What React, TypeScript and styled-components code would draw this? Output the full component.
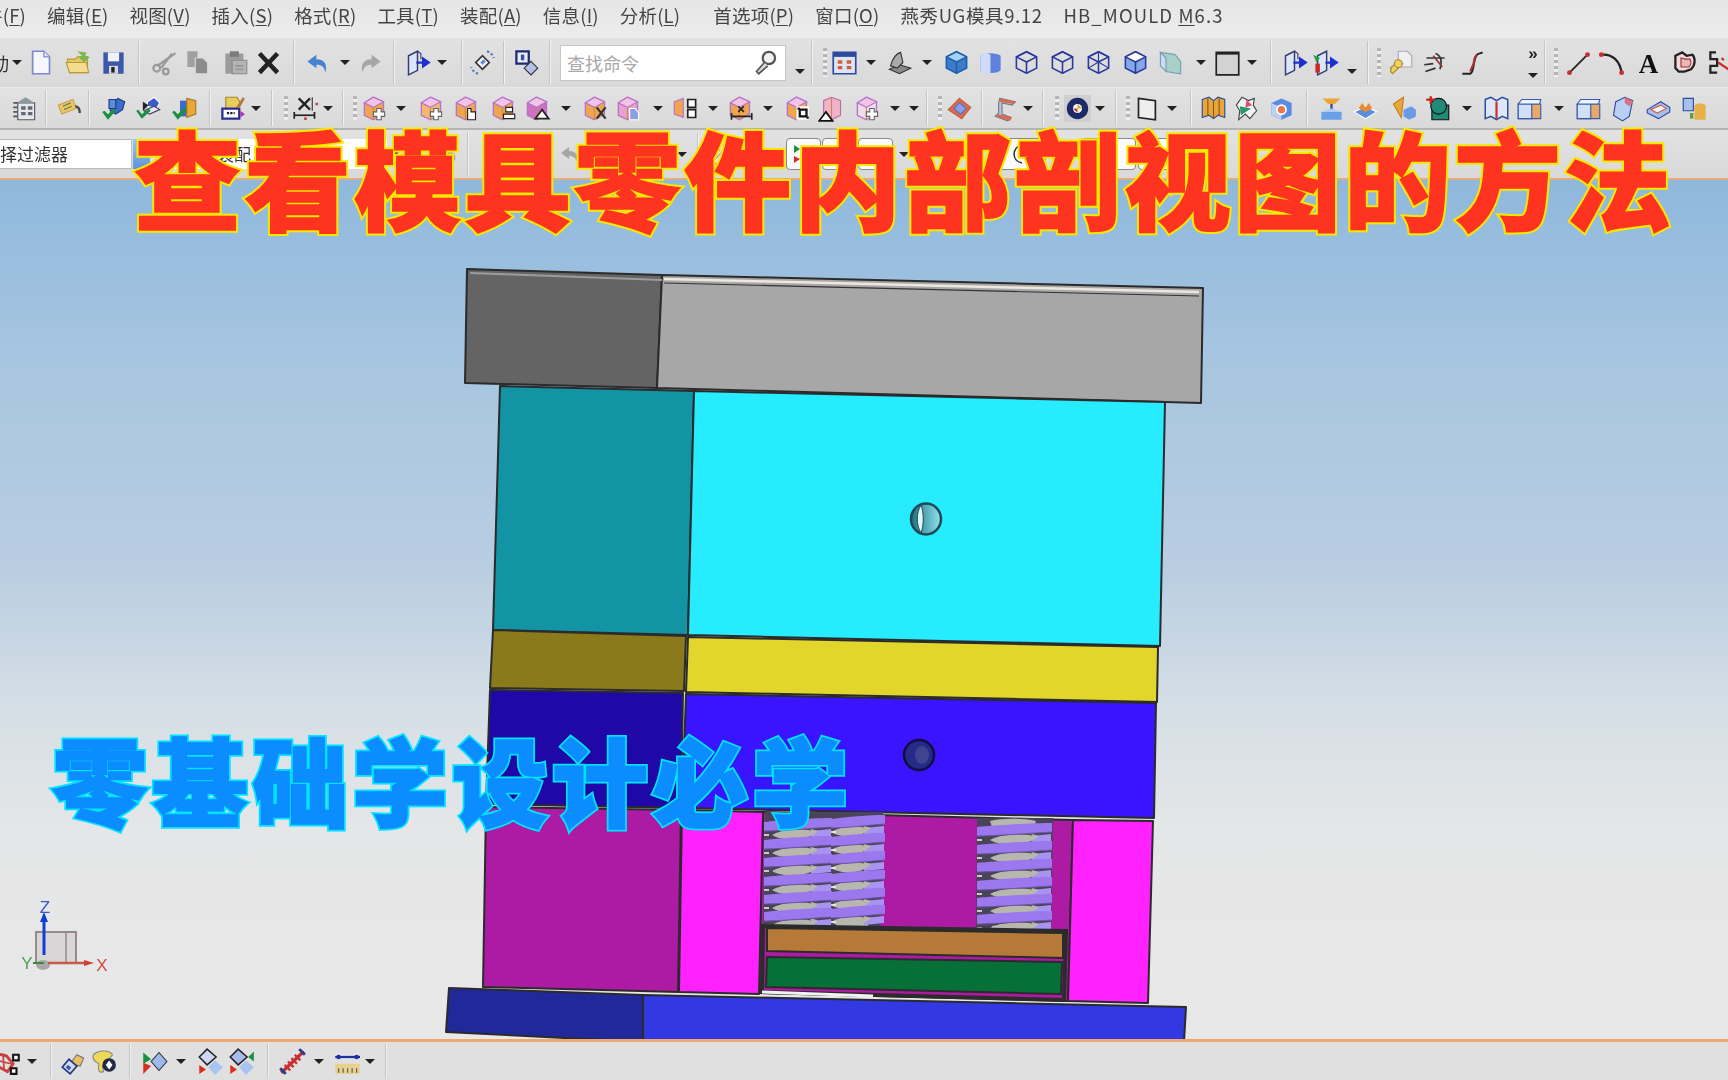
import React from "react";
import styled, { createGlobalStyle } from "styled-components";

const Global = createGlobalStyle`
  html, body { margin: 0; padding: 0; background: #e8e8e8; }
  #root { width: 1728px; height: 1080px; overflow: hidden; }
`;

const Page = styled.div`
  position: relative;
  width: 1728px;
  height: 1080px;
  overflow: hidden;
  display: flex;
  flex-direction: column;
  font-family: "Noto Sans CJK SC", "Noto Sans", sans-serif;
`;
const MenuBar = styled.div`
  height: 38px;
  box-sizing: border-box;
  padding-bottom: 8px;
  flex: none;
  display: flex;
  align-items: center;
  gap: 21px;
  margin-left: -16px;
  background: linear-gradient(#e6e6e6, #ececec);
  filter: blur(0.45px);
`;
const MenuItem = styled.span<{ $after?: number; $track?: number }>`
  font-size: 18.5px;
  color: #444;
  white-space: nowrap;
  margin-right: ${(p) => p.$after ?? 0}px;
  letter-spacing: ${(p) => p.$track ?? 0.2}px;
  u { text-underline-offset: 2px; }
`;
const ToolRow = styled.div<{ $h: number; $top?: number }>`
  height: ${(p) => p.$h}px;
  margin-top: ${(p) => p.$top ?? 0}px;
  flex: none;
  display: flex;
  align-items: center;
  background: linear-gradient(#e2e2e2, #d9d9d9);
  filter: blur(0.5px);
`;
const Slot = styled.div<{ $w: number }>`
  width: ${(p) => p.$w}px;
  flex: none;
  height: 100%;
  display: flex;
  align-items: center;
  justify-content: center;
  svg { display: block; flex: none; }
`;
const Sep = styled.div`
  width: 2px;
  height: 88%;
  background: #f2f2f2;
  border-left: 1px solid #c4c4c4;
  box-sizing: border-box;
`;
const Dots = styled.div`
  width: 4px;
  height: 60%;
  background: repeating-linear-gradient(#b5b5b5 0 3px, #eee 3px 6px);
`;
const Drop = styled.div<{ $low?: boolean }>`
  width: 0;
  height: 0;
  flex: none;
  margin-top: ${(p) => (p.$low ? 18 : 0)}px;
  border-left: 5px solid transparent;
  border-right: 5px solid transparent;
  border-top: 5px solid #222;
`;
const ClippedGlyph = styled.span`
  font-size: 18px;
  color: #333;
  margin-left: -9px;
  margin-right: 3px;
`;
const SearchBox = styled.div`
  width: 226px;
  height: 36px;
  box-sizing: border-box;
  background: #fff;
  border: 1px solid #c6c6c6;
  display: flex;
  align-items: center;
  justify-content: space-between;
  padding: 0 6px;
  font-size: 18px;
  color: #a8a8a8;
`;
const More = styled.div`
  display: flex;
  flex-direction: column;
  align-items: center;
  gap: 12px;
  font: bold 17px/14px "Liberation Sans", sans-serif;
  color: #222;
`;
const FilterBox = styled.div`
  width: 132px;
  height: 30px;
  flex: none;
  box-sizing: border-box;
  background: #fff;
  border: 1px solid #bbb;
  border-left: 0;
  font-size: 17px;
  line-height: 28px;
  color: #333;
  overflow: hidden;
  white-space: nowrap;
  text-indent: -17px;
`;
const ComboArrow = styled.div`
  width: 17px;
  height: 30px;
  flex: none;
  margin-left: 1px;
  display: flex;
  align-items: center;
  justify-content: center;
  background: linear-gradient(#9cc4f0, #5e94d8);
`;
const Combo = styled.div`
  width: 214px;
  height: 30px;
  flex: none;
  margin-left: 23px;
  box-sizing: border-box;
  padding-left: 44px;
  background: #fff;
  font-size: 17px;
  line-height: 30px;
  color: #333;
`;
const MiniButton = styled.div<{ $w?: number }>`
  width: ${(p) => p.$w ?? 35}px;
  height: 32px;
  flex: none;
  box-sizing: border-box;
  background: #fafafa;
  border: 1px solid #888;
  border-radius: 4px;
  display: flex;
  align-items: center;
  justify-content: center;
`;
const ThinLine = styled.div<{ $h: number; $c: string }>`
  height: ${(p) => p.$h}px;
  flex: none;
  background: ${(p) => p.$c};
`;
const Canvas = styled.div`
  position: relative;
  flex: none;
  height: 859px;
  overflow: hidden;
  background: linear-gradient(#8fb8dd 0%, #a8c6e0 22%, #b9cde1 45%, #d6dfe6 62%, #e5e6e7 76%, #e8e8e8 100%);
`;
const Drawing = styled.svg`
  position: absolute;
  inset: 0;
  filter: blur(0.4px);
`;
const Banner = styled.div<{ $x: number; $y: number; $size: number; $space: number; $fill: string; $edge: string; $thick: number; $out: number }>`
  position: absolute;
  left: ${(p) => p.$x}px;
  top: ${(p) => p.$y}px;
  font-size: ${(p) => p.$size}px;
  line-height: 1;
  font-weight: 900;
  letter-spacing: ${(p) => p.$space}px;
  white-space: nowrap;
  color: ${(p) => p.$fill};
  -webkit-text-stroke: ${(p) => p.$out}px ${(p) => p.$edge};
  &::after {
    content: attr(data-text);
    position: absolute;
    left: 0;
    top: 0;
    -webkit-text-stroke: ${(p) => p.$thick}px ${(p) => p.$fill};
  }
`;
const BottomBar = styled.div`
  flex: none;
  height: 38px;
  display: flex;
  align-items: center;
  background: #e0e0e0;
  filter: blur(0.5px);
`;
const Fixed = styled.div<{ $l: number; $w: number; $gap?: number }>`
  margin-left: ${(p) => p.$l}px;
  width: ${(p) => p.$w}px;
  flex: none;
  height: 100%;
  display: flex;
  align-items: center;
  justify-content: center;
  gap: ${(p) => p.$gap ?? 0}px;
`;

const hex = "M3 7 11 2l9 4v11l-9 5-8-4z";
const Mold = ({ o, c = "#f0a64c" }: { o?: React.ReactNode; c?: string }) => (
  <g>
    <path d={hex} fill={c} stroke="#b574c8" strokeWidth="1.2" />
    <path d="M3 7 11 2l9 4-9 5z" fill="#f2c4e6" stroke="#b574c8" strokeWidth="1" />
    <path d="M11 11v11" stroke="#c98a50" strokeWidth="1" />
    {o}
  </g>
);
const plus = (
  <path d="M14 12h4v3h3v4h-3v3h-4v-3h-3v-4h3z" fill="#fff" stroke="#666" strokeWidth="1" />
);
const Cube = ({ f = "none", t = "none", s = "#2a3a9c" }: { f?: string; t?: string; s?: string }) => (
  <g stroke={s} strokeWidth="1.4" strokeLinejoin="round">
    <path d="M3 7 12 2.5 21 7v10l-9 4.500-9-4.500z" fill={f} />
    <path d="M3 7l9 4.500L21 7l-9-4.500z" fill={t} />
    <path d="M12 11.500v10" fill="none" />
  </g>
);

const Icons: Record<string, React.ReactNode> = {
  neu: <><path d="M5 2h10l5 5v15H5z" fill="#f4f6fc" stroke="#7d89cc" strokeWidth="1.5" /><path d="M15 2v5h5" fill="#dfe3f5" stroke="#7d89cc" /></>,
  open: <><path d="M2 9h7l2-2h9v14H4z" fill="#e9c660" stroke="#b89a40" /><path d="M1 12h18l2 9H4z" fill="#f4dc8c" stroke="#b89a40" /><path d="M11 2l8 1-1 3 4 1-5 5-5-5 3-1z" fill="#7cb84c" /></>,
  save: <><path d="M3 3h18v19H3z" fill="#3c58a8" /><path d="M7 3h10v8H7z" fill="#eef2fa" /><path d="M8 15h8v7H8z" fill="#d8d8e0" /><path d="M10 16h3v5h-3z" fill="#222" /></>,
  cut: <><path d="M21 2 7 16M18 3 11 17" stroke="#9a9a9a" strokeWidth="2" transform="rotate(10 12 12)" /><circle cx="6" cy="17" r="3" fill="none" stroke="#9a9a9a" strokeWidth="2" /><circle cx="14" cy="20" r="2.500" fill="none" stroke="#9a9a9a" strokeWidth="2" /></>,
  copy: <><path d="M3 2h9v14H3z" fill="#a0a0a0" /><path d="M10 8h7l4 4v10H10z" fill="#8c8c8c" stroke="#d8d8d8" /></>,
  paste: <><path d="M3 4h16v18H3z" fill="#9c9c9c" /><path d="M7 2h8v5H7z" fill="#7c7c7c" /><path d="M9 10h13v12H9z" fill="#b4b4b4" stroke="#8a8a8a" /><path d="M12 15h7M12 18h7" stroke="#888" /></>,
  x: <path d="M4 4l16 17M20 4 4 21" stroke="#222" strokeWidth="4" />,
  undo: <path d="M3 11l8-6v4c7 0 10 4 8 12-1-5-3-7-8-7v3z" fill="#4a82d0" />,
  redo: <path d="M21 11l-8-6v4C6 9 3 13 5 21c1-5 3-7 8-7v3z" fill="#a6a6a6" />,
  undoGray: <><path d="M3 11l8-6v4c7 0 10 4 8 12-1-5-3-7-8-7v3z" fill="#a6a6a6" /></>,
  feat: <><path d="M4 6l8-4v17l-8 4z" fill="#dce6f6" stroke="#333d7a" strokeWidth="1.300" /><path d="M12 2l3 2v5" fill="none" stroke="#333d7a" /><path d="M11 12h8M17 8.500l5 3.500-5 3.500z" stroke="#1c30d0" fill="#1c30d0" strokeWidth="2" /></>,
  feat2: <><path d="M5 6l8-4v17l-8 4z" fill="#dce6f6" stroke="#333d7a" strokeWidth="1.300" /><path d="M1 5l6 3-3 4z" fill="#1ca040" /><path d="M3 13h4v8H3z" fill="#cc2a20" /><path d="M12 12h7M17 8.500l5 3.500-5 3.500z" stroke="#1c30d0" fill="#1c30d0" strokeWidth="2" /></>,
  sym: <><path d="M12 6l6 6-6 6-6-6z" fill="#eef2fb" stroke="#333" strokeWidth="1.500" /><path d="M10 12l3-3 2 2-3 3z" fill="#6a86d8" /><path d="M16 2c3 1 5 3 6 6M8 22c-3-1-5-3-6-6" fill="none" stroke="#5476c8" strokeWidth="2" strokeDasharray="2 2" /></>,
  lay: <><path d="M3 2h11v11H3z" fill="#e6ecf8" stroke="#1f2a70" strokeWidth="2" /><path d="M7 5h3v5H7z" fill="#3c4aa0" /><path d="M16 11l6 6-6 6-6-6z" fill="#b4c2e8" stroke="#333" /></>,
  mag: <><circle cx="15" cy="8" r="5.500" fill="#f2f2f2" stroke="#555" strokeWidth="2" /><path d="M11 12 4 20l2 2 8-7" fill="#ddd" stroke="#555" strokeWidth="1.500" /></>,
  win: <><path d="M2 3h20v19H2z" fill="#dde4f6" stroke="#2e4aa0" strokeWidth="1.500" /><path d="M2 3h20v4H2z" fill="#2e4aa0" /><path d="M6 10h4v3H6zM14 10h4v3h-4zM6 15h4v3H6zM14 15h4v3h-4z" fill="#d2602c" /></>,
  shade: <><path d="M3 18l9-4 10 3-10 5z" fill="#8a8a8a" stroke="#333" /><path d="M4 15c2-7 5-11 9-12l2 9-5 5z" fill="#aaa" stroke="#333" /></>,
  c1: <Cube f="#3f7cc8" t="#a8d0f0" s="#1c5fb0" />,
  c2: <><path d="M3 6c3-3 15-3 18 0v13c-3 3-15 3-18 0z" fill="#5f80dc" /><path d="M3 6c3-3 9-3 9 0v15c-3 1-7 0-9-2z" fill="#cfdcf8" /></>,
  c3: <Cube />, c4: <Cube />,
  c5: <><Cube /><path d="M3 17 12 11.500 21 17M12 2.500v9" stroke="#2a3a9c" fill="none" /></>,
  c6: <Cube f="#86a8e8" t="#fff" />,
  sheet: <><path d="M3 3l13 2 5 6v11L8 20z" fill="#a8d0c8" stroke="#7a9ab8" /><path d="M3 3l5 5v12L3 15z" fill="#c8dcec" stroke="#7a9ab8" /></>,
  sq: <><path d="M2 3h20v20H2z" fill="#d2d2d2" stroke="#222" strokeWidth="1.500" /><path d="M2 3h20v2H2z" fill="#222" /></>,
  key: <><path d="M10 2h8l4 4v10H10z" fill="#eef0f6" stroke="#aaa" /><path d="M11 10l3 3-9 9-2-2 1-2-1-1z" fill="#f0d060" stroke="#a88a30" /><circle cx="10" cy="13" r="3.500" fill="#f0d060" stroke="#a88a30" /></>,
  trim: <><path d="M4 8h16M12 4c5 2 6 6 4 14M2 14l8-1M3 20l9-3" stroke="#333" fill="none" strokeWidth="1.500" /><path d="M10 6l8 10" stroke="#a03030" strokeWidth="1.500" /></>,
  spl: <><path d="M3 22h7c4-2 2-12 6-17 1-1 3-1 5-2" fill="none" stroke="#222" strokeWidth="1.800" /><path d="M10 20l3-7 1-5 2-3" stroke="#a83030" strokeWidth="2" fill="none" /></>,
  line: <><path d="M4 21 20 5" stroke="#222" strokeWidth="1.500" /><circle cx="4" cy="21" r="2.200" fill="#c83030" /><circle cx="20" cy="5" r="2.200" fill="#c83030" /></>,
  arc: <><path d="M3 5c10-1 17 6 18 17" fill="none" stroke="#222" strokeWidth="2" /><circle cx="3" cy="5" r="2.200" fill="#c83030" /><circle cx="21" cy="21" r="2.200" fill="#c83030" /></>,
  txt: <text x="12" y="21" fontSize="24" fontWeight="700" fontFamily="Liberation Serif" textAnchor="middle" fill="#111">A</text>,
  sk: <><path d="M3 6l6-3 4 3 5-1c3 3 3 9-1 13l-6 2H6L3 17z" fill="#f2d8d8" stroke="#222" strokeWidth="2" /><path d="M8 8l4 1 4 0c1 2 1 5-1 7H8z" fill="#e8b8b8" stroke="#a03030" /></>,
  coil: <><path d="M8 3H3v6h6v6H3v6h6" fill="none" stroke="#222" strokeWidth="2" /><path d="M10 12l12 8M13 8l2 2" stroke="#c83030" strokeWidth="2" /></>,
  cal: <><path d="M6 7h15v15H6z" fill="#e4eaea" stroke="#556" /><path d="M5 7l8-5 8 5z" fill="#8a9aa0" /><path d="M9 10h4v3H9zM15 10h4v3h-4zM9 15h4v3H9zM15 15h4v3h-4z" fill="#667" /><path d="M2 7h4M2 11h4M2 15h4M2 19h4" stroke="#556" strokeWidth="1.500" /></>,
  note: <><path d="M3 9l13-5 3 8-13 5z" fill="#e8c868" stroke="#c8a448" /><path d="M7 10l7-3M8 13l7-3" stroke="#775" /><path d="M18 10c3 0 4 2 4 6" fill="none" stroke="#444" strokeWidth="2" /></>,
  a1: <><path d="M10 8l6-5 6 3-2 7-6 4-5-3z" fill="#3a6cc8" stroke="#223a80" /><path d="M8 4h6v8H8z" fill="#5a8ce0" stroke="#223a80" /><path d="M2 15l5 7 7-8-2-2-5 5-3-3z" fill="#1c9040" /></>,
  a2: <><path d="M11 6l6-4 5 5-3 5-8-2z" fill="#3a5ec8" stroke="#fff" /><path d="M8 14l9-4 5 3-9 4z" fill="#e4e8f4" stroke="#446" /><path d="M1 14l5 7 8-7-2-2-6 5-3-4z" fill="#1c9040" /><path d="M7 6l5 3-5 5z" fill="#222" /></>,
  a3: <><path d="M8 5h7v14H8z" fill="#3a6cc8" /><path d="M14 3l8 2v12l-8 3z" fill="#e8a838" stroke="#a87820" /><path d="M1 15l5 7 8-9-2-2-6 6-3-3z" fill="#1c9040" /></>,
  a4: <><path d="M6 2h10l3 5-4 5H6z" fill="#e8cc60" stroke="#a08828" /><path d="M3 12h15v9H3z" fill="#fff" stroke="#2c2c90" strokeWidth="2" /><path d="M7 16h7" stroke="#222" strokeWidth="2" strokeDasharray="2 1" /><path d="M19 14l4 3-4 3z" fill="#b030c0" /><path d="M16 10l5-8 2 1-5 9z" fill="#b07840" /></>,
  dim: <><path d="M6 3l10 10M16 3 6 13" stroke="#222" strokeWidth="2" /><path d="M2 18h18" stroke="#222" strokeWidth="1.500" /><path d="M2 15v6M20 15v6" stroke="#222" strokeWidth="1.500" /><path d="M18 2v12" stroke="#333" /><path d="M11 20l2 2m0-2-2 2M21 7l2 2m0-2-2 2" stroke="#c83030" /></>,
  m1: <Mold o={plus} />,
  m2: <Mold o={plus} c="#f4b870" />,
  m3: <Mold o={<path d="M13 12h3v3h4v7h-7z" fill="#fff" stroke="#222" />} />,
  m4: <Mold o={<path d="M14 11h6v4h-6zM12 17h10v4H12z" fill="#fff" stroke="#222" />} />,
  m5: <Mold c="#d070c0" o={<path d="M16 13l6 8H10z" fill="#fff" stroke="#222" strokeWidth="1.500" />} />,
  m6: <Mold o={<path d="M13 11l8 10M21 11l-8 10" stroke="#333" strokeWidth="2" />} />,
  m7: <Mold c="#e8a0d0" o={<path d="M13 12h5l3 4v6h-8z" fill="#8aa0e0" stroke="#fff" />} />,
  m8: <><path d="M2 6l8-3v17l-8-3z" fill="#f0a64c" stroke="#b574c8" /><path d="M14 4h7v7h-7zM14 13h7v7h-7z" fill="#fff" stroke="#222" strokeWidth="1.500" /></>,
  m9: <Mold o={<path d="M4 19h18M4 16v6M22 16v6M10 10l5 5m0-5-5 5" stroke="#222" strokeWidth="1.500" fill="none" />} />,
  m10: <Mold o={<><path d="M11 10h11v12H11z" fill="#fff" /><path d="M14 13h6v6h-6z" fill="none" stroke="#111" strokeWidth="2" /><path d="M12 11h2v2h-2zM20 19h2v2h-2z" fill="#111" /></>} />,
  m11: <><path d="M5 5l7-3 8 3v13l-8 4-7-4z" fill="#f0b4c8" stroke="#c06aa0" /><path d="M12 2v20" stroke="#d08060" /><path d="M7 15l6 8H1z" fill="#fff" stroke="#111" strokeWidth="1.500" /></>,
  m12: <Mold c="#f2dcec" o={plus} />,
  surf: <><path d="M12 3l10 8-8 10L2 13z" fill="#d86a50" stroke="#c06040" /><path d="M12 7l6 5-5 5-6-5z" fill="#8aa0e8" stroke="#5a70c8" /></>,
  ribbon: <><path d="M6 3l14 3-3 3-9-2v10l8 3-3 3-11-4 3-3V7z" fill="#b0c8f0" stroke="#777" /><path d="M6 3l14 3-2 2L6 6zM3 19l12 4 2-3-12-3z" fill="#d86a50" /></>,
  disc: <><path d="M0 0h24v24H0z" fill="#cfcfcf" /><circle cx="12" cy="12" r="9.500" fill="#1c2a68" /><circle cx="12" cy="12" r="4" fill="#fff" /><path d="M12 8l4 4h-4z" fill="#d8a020" /><path d="M12 16l-4-4h4z" fill="#c04030" /></>,
  sheet2: <><path d="M4 3l15 2v17L4 20z" fill="#eee" stroke="#222" strokeWidth="1.500" /></>,
  book: <><path d="M2 4l6-2 4 3 4-3 6 2v16l-6-2-4 3-4-3-6 2z" fill="#e8a838" stroke="#2a4aa0" /><path d="M7 3v15M12 5v16M17 3v15" stroke="#8a5020" /></>,
  bow: <><path d="M8 2l6 3 5-2-1 6 3 5-6 7-4-4-6 5 1-8-3-5z" fill="#f2f4f8" stroke="#444" /><path d="M6 10l10 2-9 6z" fill="#2a9a68" /><path d="M12 4l5 5-6 2z" fill="#e0506a" /></>,
  box: <><path d="M3 7l9-4 9 4v11l-9 4-9-4z" fill="#5a8ce0" /><path d="M3 7l9 4v11l-9-4z" fill="#bcd0f0" /><circle cx="12" cy="13" r="4" fill="#e87848" stroke="#fff" strokeWidth="1.500" /></>,
  lift: <><path d="M4 3h16l-5 5H9z" fill="#e8a838" /><path d="M12 8v7" stroke="#2a4aa0" strokeWidth="2" /><path d="M3 15h18v7H3z" fill="#6aa0e8" /><path d="M3 15l9-3 9 3z" fill="#b0ccf0" /></>,
  pile: <><path d="M2 15l10-5 10 5-10 6z" fill="#5a8ce0" stroke="#fff" /><path d="M6 12l3-5 3 4 3-4 3 5-6 3z" fill="#e88a30" /></>,
  flow: <><path d="M3 8l9-6-2 18z" fill="#e8a838" stroke="#c08020" /><path d="M12 13l7-3 4 3v6l-6 3-5-3z" fill="#6a9ae8" /></>,
  geo: <><path d="M7 9h15v13H7z" fill="#1f8a78" stroke="#111" /><circle cx="13" cy="10" r="7" fill="#1f8a78" stroke="#111" /><path d="M2 4h8M6 1v7" stroke="#c82020" strokeWidth="2" /></>,
  book2: <><path d="M2 4l5-2 5 3 5-3 5 2v17l-5-2-5 3-5-3-5 2z" fill="#dce8f8" stroke="#2a4aa0" strokeWidth="1.300" /><path d="M11 6h2v15h-2z" fill="#c83030" /></>,
  block: <><path d="M2 8h20v13H2z" fill="#e8a868" stroke="#3a5ab0" /><path d="M2 8h12v13H2z" fill="#cfe0f8" stroke="#3a5ab0" /><path d="M2 8l3-4h17l-1 4z" fill="#eef4fb" stroke="#3a5ab0" /></>,
  part: <><path d="M6 6l8-4 7 3-3 14-6 4-8-5z" fill="#b8d0f4" stroke="#2a4aa0" /><path d="M14 2l8 4-4 4-4-3z" fill="#e07080" /></>,
  wedge: <><path d="M2 13l12-7 8 5v4l-10 6-10-5z" fill="#a8c0ec" stroke="#2a4aa0" /><path d="M5 13l9-4 5 3-8 4z" fill="#f4f4f4" stroke="#d06060" /></>,
  cups: <><path d="M2 3h9v11H2z" fill="#a8c0ec" stroke="#2a4aa0" /><path d="M12 9c3-2 8-2 10 0v13H12z" fill="#e8b048" /><path d="M8 16h3v5H8z" fill="#6a9a40" /></>,
  grip: <><path d="M9 14l6-8 6 3-3 7z" fill="#e8c060" stroke="#777" /><path d="M8 10l7 6-6 7-7-6z" fill="#cfdcf4" stroke="#2a3a80" strokeWidth="1.500" /><path d="M7 15l3 2-2 3-3-3z" fill="#3a5ab0" /></>,
  pal: <><path d="M3 6c4-4 14-5 17 0l-5 6-4 4 1 5c-5 2-5-3-4-7-2-1-7-3-5-8z" fill="#f0d858" stroke="#888" /><circle cx="17" cy="15" r="6" fill="#202848" /><path d="M17 11l3 4-3 4-3-4z" fill="#fff" /></>,
  tri: <><path d="M2 4l7 6-7 4z" fill="#1c9040" /><path d="M2 13l7 3-7 7z" fill="#d83020" /><path d="M16 4l7 8-7 8-7-8z" fill="#9cb8ec" stroke="#333" /></>,
  dia1: <><path d="M9 1l8 7-8 7-7-7z" fill="#ccd8f4" stroke="#222" strokeWidth="1.300" /><path d="M2 15l6 4-6 4z" fill="#d83020" /><path d="M16 11l7 6-7 7-6-7z" fill="#a8c4f2" /></>,
  dia2: <><path d="M9 1l8 7-8 7-7-7z" fill="#a8bcec" stroke="#222" strokeWidth="1.300" /><path d="M23 3v9l-5-4z" fill="#1c9040" /><path d="M2 15l6 4-6 4z" fill="#d83020" /><path d="M16 11l7 6-7 7-6-7z" fill="#a8c4f2" /></>,
  spr: <><path d="M2 22 22 3" stroke="#c83030" strokeWidth="3" /><path d="M5 15l5 5M8 12l5 5M11 9l5 5M14 6l5 5" stroke="#c83030" strokeWidth="2" /><path d="M1 18l5 5M18 1l5 5" stroke="#2a3a90" strokeWidth="2.500" /></>,
  rule: <><path d="M2 14h22v9H2z" fill="#e8d090" /><path d="M5 18v4M9 18v4M13 18v4M17 18v4M21 18v4" stroke="#555" /><path d="M2 8h22" stroke="#1c30a0" strokeWidth="2" /><circle cx="5" cy="8" r="2" fill="#1c30a0" /><circle cx="21" cy="8" r="2" fill="#1c30a0" /></>,
  pts: <><path d="M2 5l9 2 6 7-5 7-9-5z" fill="none" stroke="#c84040" strokeWidth="2.500" /><path d="M3 11l12 3M8 5l1 15" stroke="#c84040" strokeWidth="1.500" /><path d="M17 6h5v5h-5zM15 18h5v5h-5z" fill="#fff" stroke="#111" strokeWidth="1.800" /></>,
  flag: <><path d="M3 3l6 4-6 4z" fill="#1c9040" /><path d="M3 14l6 3-6 4z" fill="#d83020" /><path d="M15 7l5 5-5 5-5-5z" fill="#eee" stroke="#333" /></>,
  tick: <path d="M6 20 14 12" stroke="#444" strokeWidth="2" />,
  arcBtn: <path d="M16 3C6 5 5 19 16 21" fill="none" stroke="#333" strokeWidth="1.600" />,
  rain: <><path d="M4 20l14-16 3 3-14 15z" fill="#e4e4ee" stroke="#888" /><path d="M8 6h3v3H8z" fill="#c83030" /><path d="M16 14h3v3h-3z" fill="#2aa090" /></>,
};

type Item = [number, string];
const Ico = ({ k, s = 27 }: { k: string; s?: number }) => (
  <svg width={s} height={s} viewBox="0 0 24 24">{Icons[k]}</svg>
);
const Row = ({ items }: { items: Item[] }) => (
  <>
    {items.map(([x, k], i) => {
      const right = i + 1 < items.length ? (x + items[i + 1][0]) / 2 : x + (x - (items[i - 1][0] + x) / 2);
      const left = i === 0 ? x - (right - x) : (items[i - 1][0] + x) / 2;
      return (
        <Slot key={i} $w={right - left} style={i === 0 ? { marginLeft: left } : undefined}>
          {k === "drop" ? <Drop /> : k === "dropLow" ? <Drop $low /> : k === "sep" ? <Sep /> : k === "dots" ? <Dots /> : <Ico k={k} />}
        </Slot>
      );
    })}
  </>
);

const row1a: Item[] = [[40, "neu"], [78, "open"], [118, "save"], [139, "sep"], [158, "cut"], [198, "copy"], [235, "paste"], [272, "x"], [293, "sep"], [316, "undo"], [345, "drop"], [372, "redo"], [394, "sep"], [416, "feat"], [445, "drop"], [461, "sep"], [482, "sym"], [504, "sep"], [526, "lay"], [550, "sep"]];
const row1b: Item[] = [[800, "dropLow"], [813, "sep"], [821, "dots"], [843, "win"], [872, "drop"], [898, "shade"], [928, "drop"], [954, "c1"], [990, "c2"], [1026, "c3"], [1062, "c4"], [1098, "c5"], [1135, "c6"], [1173, "sheet"], [1201, "drop"], [1227, "sq"], [1256, "drop"], [1269, "sep"], [1290, "feat"], [1327, "feat2"], [1356, "dropLow"], [1370, "sep"], [1375, "dots"], [1396, "key"], [1436, "trim"], [1472, "spl"]];
const row1c: Item[] = [[1545, "sep"], [1552, "dots"], [1575, "line"], [1611, "arc"], [1649, "txt"], [1686, "sk"], [1720, "coil"]];
const row2: Item[] = [[24, "cal"], [45, "sep"], [68, "note"], [91, "sep"], [107, "a1"], [150, "a2"], [188, "a3"], [211, "sep"], [229, "a4"], [260, "drop"], [273, "sep"], [282, "dots"], [305, "dim"], [330, "drop"], [345, "sep"], [352, "dots"], [372, "m1"], [403, "drop"], [427, "m2"], [467, "m3"], [503, "m4"], [540, "m5"], [567, "drop"], [591, "m6"], [631, "m7"], [659, "drop"], [684, "m8"], [715, "drop"], [738, "m9"], [770, "drop"], [793, "m10"], [832, "m11"], [870, "m12"], [898, "drop"], [915, "drop"], [927, "sep"], [937, "dots"], [958, "surf"], [983, "sep"], [1005, "ribbon"], [1032, "drop"], [1044, "sep"], [1053, "dots"], [1076, "disc"], [1103, "drop"], [1117, "sep"], [1125, "dots"], [1145, "sheet2"], [1176, "drop"], [1190, "sep"], [1207, "book"], [1248, "bow"], [1284, "box"], [1309, "sep"], [1326, "lift"], [1366, "pile"], [1403, "flow"], [1440, "geo"], [1467, "drop"], [1494, "book2"], [1531, "block"], [1560, "drop"], [1586, "block"], [1622, "part"], [1658, "wedge"], [1694, "cups"]];
const row4: Item[] = [[7, "pts"], [35, "drop"], [50, "sep"], [68, "grip"], [107, "pal"], [130, "sep"], [152, "tri"], [182, "drop"], [207, "dia1"], [245, "dia2"], [268, "sep"], [290, "spr"], [320, "drop"], [346, "rule"], [373, "drop"], [386, "sep"]];

const slice = (items: Item[], from: number): Item[] => items.map(([x, k]) => [x - from, k]);

const Poly = ({ p, f }: { p: string; f: string }) => (
  <polygon points={p} fill={f} stroke="#2b2b2b" strokeWidth="2" strokeLinejoin="round" />
);

const Coil = ({ x0, x1, y, gx0, gx1 }: { x0: number; x1: number; y: number; gx0: number; gx1: number }) => (
  <g>
    <path d={`M${gx1 - 4} ${y + 7} L${x1 - 1} ${y + 5} L${x1 - 1} ${y + 12} L${gx1 - 4} ${y + 14}Z`} fill="#a893f0" />
    <path d={`M${gx0 - 3} ${y + 11} C${gx0 + 10} ${y + 3} ${gx1 - 10} ${y + 2} ${gx1 + 3} ${y + 7} C${gx1 - 6} ${y + 17} ${gx0 + 8} ${y + 18} ${gx0 - 3} ${y + 11}Z`} fill="#b8b7ae" />
    <path d={`M${gx0 + 2} ${y + 8} C${gx0 + 10} ${y + 5} ${gx1 - 12} ${y + 4} ${gx1 - 4} ${y + 6}`} stroke="#3a3a34" strokeWidth="1" fill="none" />
    <path d={`M${x0} ${y - 2} C${x0 + 16} ${y - 4} ${x1 - 16} ${y - 6} ${x1} ${y - 6} L${x1} ${y + 3} C${x1 - 16} ${y + 4} ${x0 + 16} ${y + 7} ${x0} ${y + 7}Z`} fill="#9c78ee" />
    <path d={`M${x0} ${y + 7} C${x0 + 16} ${y + 7} ${x1 - 16} ${y + 4} ${x1} ${y + 3}`} stroke="#6a55a8" strokeWidth="1" fill="none" />
    <path d={`M${x0} ${y + 11} h5`} stroke="#f4f4f4" strokeWidth="1.500" />
  </g>
);

const Mould = () => (
  <Drawing width="1728" height="860" viewBox="0 180 1728 860">
    <defs>
      <linearGradient id="bore" x1="0" x2="1" y1="0" y2="0">
        <stop offset="0" stopColor="#1f6f80" />
        <stop offset="1" stopColor="#8fe4ee" />
      </linearGradient>
    </defs>
    <Poly p="467,269 662,275 657,388 465,383" f="#646464" />
    <Poly p="662,275 1203,288 1201,403 657,388" f="#a7a7a7" />
    <path d="M470 273 662 280" stroke="#9c9c9c" strokeWidth="2" />
    <path d="M664 279 1199 292" stroke="#ece8e0" strokeWidth="2.500" />
    <path d="M664 283 1199 296" stroke="#333" strokeWidth="1.200" />
    <Poly p="500,386 694,391 688,635 493,630" f="#1394a4" />
    <Poly p="694,391 1165,402 1160,646 688,635" f="#27ecff" />
    <ellipse cx="926" cy="519" rx="15" ry="15.500" fill="url(#bore)" stroke="#1c4a58" strokeWidth="2.500" />
    <path d="M921 505c-5 8-5 20 0 28 3-8 3-20 0-28z" fill="#dff8f8" stroke="#1c4a58" />
    <Poly p="493,630 686,636 684,691 490,688" f="#8a7a1c" />
    <Poly p="688,637 1158,647 1157,702 686,692" f="#e2d62c" />
    <Poly p="490,690 683,693 681,808 486,804" f="#2008a8" />
    <Poly p="686,694 1156,703 1154,818 682,808" f="#3a14ff" />
    <ellipse cx="919" cy="755" rx="15" ry="15" fill="#262a88" stroke="#101040" strokeWidth="2.500" />
    <ellipse cx="922" cy="755" rx="7" ry="9" fill="#40448e" />
    <Poly p="486,807 681,810 678,992 483,987" f="#ad1aa4" />
    <Poly p="763,812 1073,820 1068,1001 758,993" f="#ad1aa4" />
    <Poly p="682,810 763,812 759,994 679,992" f="#ff22ff" />
    <Poly p="1073,820 1153,821 1148,1003 1068,1001" f="#ff22ff" />
    <path d="M765 812h118l-3 118-117-3zM977 818h76l-2 116-75-3z" fill="#4a4458" />
    <path d="M990 821c12-3 34-3 46 0l-2 6h-42zM992 926c12-3 32-3 44 0v6h-44z" fill="#b8b7ae" />
    <path d="M777 920c12-3 30-3 40 0v7h-40zM836 918c10-2 24-2 32 0v8h-32z" fill="#b8b7ae" />
    {[824, 842, 860, 879, 897, 914].map((y) => (
      <React.Fragment key={y}>
        <Coil x0={764} x1={832} y={y} gx0={775} gx1={815} />
        <Coil x0={831} x1={885} y={y - 3} gx0={834} gx1={868} />
      </React.Fragment>
    ))}
    {[829, 847, 865, 883, 900, 917].map((y) => (
      <Coil key={y} x0={977} x1={1052} y={y} gx0={993} gx1={1036} />
    ))}
    <path d="M763 926 1066 931 1064 1000 762 992z" fill="none" stroke="#2b2b2b" strokeWidth="4" />
    <Poly p="767,928 1063,933 1063,958 767,951" f="#b67a38" />
    <Poly p="767,957 1062,962 1061,994 766,987" f="#067038" />
    <path d="M762 992 873 996" stroke="#f2f2f2" strokeWidth="3" />
    <Poly p="449,988 643,995 643,1042 446,1032" f="#20289a" />
    <Poly p="643,995 1186,1007 1184,1042 643,1042" f="#3238e2" />
  </Drawing>
);

const Gizmo = () => (
  <Drawing width="1728" height="860" viewBox="0 180 1728 860">
    <path d="M36 932h40v31H36z" fill="#d8d6d6" stroke="#968a8a" strokeWidth="2" />
    <path d="M66 932v31" stroke="#968a8a" strokeWidth="1.500" />
    <ellipse cx="43" cy="965" rx="7" ry="5" fill="#a8a8a8" />
    <path d="M44 955v-36" stroke="#1040d0" strokeWidth="3" />
    <path d="M44 912l-4 10h8z" fill="#1040d0" />
    <path d="M33 963h11" stroke="#3c8a3c" strokeWidth="2" />
    <path d="M48 963h38" stroke="#c85a4a" strokeWidth="2.500" />
    <path d="M94 963l-10-3v6z" fill="#d04030" />
    <text x="45" y="913" fontSize="17" fontFamily="Liberation Sans" fill="#3a5ad0" textAnchor="middle">Z</text>
    <text x="102" y="971" fontSize="17" fontFamily="Liberation Sans" fill="#d04a40" textAnchor="middle">X</text>
    <text x="27" y="969" fontSize="17" fontFamily="Liberation Sans" fill="#4aa05a" textAnchor="middle">Y</text>
  </Drawing>
);

const menu: [string, string, string, number?][] = [
  ["件(", "F", ")"], ["编辑(", "E", ")"], ["视图(", "V", ")"], ["插入(", "S", ")"], ["格式(", "R", ")"], ["工具(", "T", ")"], ["装配(", "A", ")"], ["信息(", "I", ")"], ["分析(", "L", ")", 12], ["首选项(", "P", ")"], ["窗口(", "O", ")"],
];

export default function App() {
  return (
    <Page>
      <Global />
      <MenuBar>
        {menu.map(([a, u, b, after]) => (
          <MenuItem key={a} $after={after}>{a}<u>{u}</u>{b}</MenuItem>
        ))}
        <MenuItem $track={0.6}>燕秀UG模具9.12</MenuItem>
        <MenuItem $track={1.1}>HB_MOULD <u>M</u>6.3</MenuItem>
      </MenuBar>
      <ToolRow $h={49}>
        <ClippedGlyph>动</ClippedGlyph>
        <Drop />
        <Row items={slice(row1a, 22)} />
        <Fixed $l={-2} $w={226}>
          <SearchBox>查找命令<Ico k="mag" /></SearchBox>
        </Fixed>
        <Row items={slice(row1b, 786)} />
        <Fixed $l={36} $w={14}><More><span>»</span><Drop /></More></Fixed>
        <Row items={slice(row1c, 1540)} />
      </ToolRow>
      <ToolRow $h={40} $top={1}>
        <Row items={row2} />
      </ToolRow>
      <ThinLine $h={2} $c="#b4b4b4" />
      <ToolRow $h={48}>
        <FilterBox>选择过滤器</FilterBox>
        <ComboArrow><Drop /></ComboArrow>
        <Combo>装配</Combo>
        <Fixed $l={0} $w={14}><Drop /></Fixed>
        <Fixed $l={36} $w={24}><Ico k="undoGray" s={20} /></Fixed>
        <Fixed $l={6} $w={2}><Sep /></Fixed>
        <Fixed $l={89} $w={24}><Ico k="undoGray" s={24} /></Fixed>
        <Fixed $l={94} $w={12}><Drop /></Fixed>
        <Fixed $l={9} $w={2}><Sep /></Fixed>
        <Fixed $l={10} $w={24}><Ico k="rain" s={24} /></Fixed>
        <Fixed $l={52} $w={108} $gap={1}>
          <MiniButton><Ico k="flag" s={24} /></MiniButton>
          <MiniButton><Ico k="tick" s={24} /></MiniButton>
          <MiniButton><Ico k="tick" s={24} /></MiniButton>
        </Fixed>
        <Fixed $l={5} $w={12}><Drop /></Fixed>
        <Fixed $l={80} $w={56}><MiniButton $w={56}><Ico k="arcBtn" s={24} /></MiniButton></Fixed>
        <Fixed $l={35} $w={112} $gap={2}>
          <MiniButton $w={55}><Ico k="tick" s={24} /></MiniButton>
          <MiniButton $w={55}><Ico k="tick" s={24} /></MiniButton>
        </Fixed>
      </ToolRow>
      <ThinLine $h={2} $c="#e8ab7c" />
      <Canvas>
        <Mould />
        <Gizmo />
      </Canvas>
      <ThinLine $h={3} $c="#eea872" />
      <BottomBar>
        <Row items={row4} />
      </BottomBar>
      <Banner data-text="查看模具零件内部剖视图的方法" $x={134} $y={122} $size={107} $space={3} $fill="#ff3420" $edge="#f6e800" $thick={1.5} $out={5.5}>查看模具零件内部剖视图的方法</Banner>
      <Banner data-text="零基础学设计必学" $x={52} $y={730} $size={96} $space={4} $fill="#0b8cff" $edge="#00e4ff" $thick={1.5} $out={5}>零基础学设计必学</Banner>
    </Page>
  );
}
